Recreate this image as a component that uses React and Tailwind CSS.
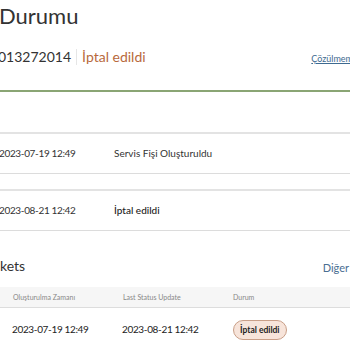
export default function App() {
  return (
    <div
      className="w-[350px] h-[350px] overflow-hidden bg-white text-[#333]"
      style={{ fontFamily: "Lato, 'Noto Sans', sans-serif" }}
    >
      <h1 className="mt-[3px] -ml-[1px] text-[22px] leading-[26px] font-normal text-[#333]">Durumu</h1>

      <div className="mt-[19px] flex items-end justify-between">
        <div className="flex items-center -ml-[2px] text-[14px] leading-[18px]">
          <span className="text-[#333]">013272014</span>
          <span className="mx-[5px] h-[16px] w-px bg-[#e6e6e6]" />
          <span className="text-[#b8693c]">İptal edildi</span>
        </div>
        <a className="text-[9px] leading-[11px] text-[#3e6a90] underline whitespace-nowrap -mr-[3px] mb-[2px]">
          Çözülmem
        </a>
      </div>

      <div className="mt-[24px] border-t-2 border-[#8aa574]" />

      <div className="mt-[40px] flex flex-col gap-[15px]">
        <div className="h-[42px] border-t-2 border-t-[#e3e3e3] border-b border-b-[#dcdcdc] flex items-center text-[10px] text-[#333]">
          <span className="w-[115px] -ml-[1px] tracking-[-0.35px]">2023-07-19 12:49</span>
          <span>Servis Fişi Oluşturuldu</span>
        </div>
        <div className="h-[42px] border-t-2 border-t-[#e3e3e3] border-b border-b-[#dcdcdc] flex items-center text-[10px] text-[#333]">
          <span className="w-[115px] -ml-[1px] tracking-[-0.35px]">2023-08-21 12:42</span>
          <span className="font-medium text-[#222]">İptal edildi</span>
        </div>
      </div>

      <div className="mt-[26px] flex items-end justify-between">
        <h2 className="text-[14px] leading-[18px] font-normal">kets</h2>
        <a className="text-[11px] leading-[15px] text-[#4a6e92] mr-[1px]">Diğer</a>
      </div>

      <div className="mt-[12px]">
        <div className="h-[21px] bg-[#f6f6f6] border-b border-[#dddddd] flex items-center text-[7px] text-[#888]">
          <span className="w-[123px] pl-[13px]">Oluşturulma Zamanı</span>
          <span className="w-[110px]">Last Status Update</span>
          <span>Durum</span>
        </div>
        <div className="h-[42px] flex items-center text-[10px] text-[#222]">
          <span className="w-[122px] pl-[12px] tracking-[-0.35px]">2023-07-19 12:49</span>
          <span className="w-[111px] tracking-[-0.35px]">2023-08-21 12:42</span>
          <span className="mt-[2px] rounded-full border border-[#c99f88] bg-[#f7e4da] px-[6px] py-[4px] text-[8.5px] leading-[10px] font-bold text-[#222]">
            İptal edildi
          </span>
        </div>
      </div>
    </div>
  );
}
